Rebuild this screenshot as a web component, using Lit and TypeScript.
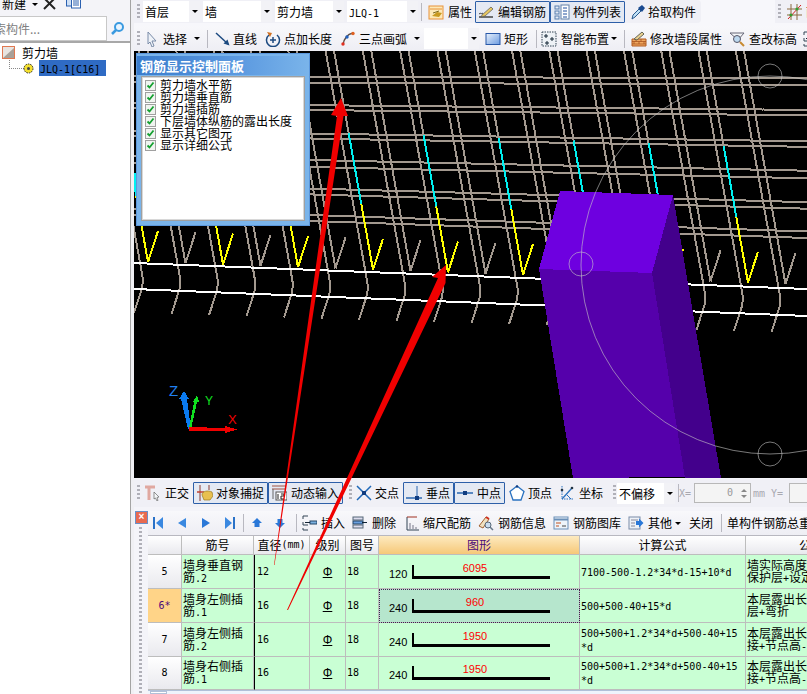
import { LitElement, html, css, svg } from "lit";
import { customElement } from "lit/decorators.js";

const ic = (c: unknown, w = 16) => html`<svg class="ic" width=${w} height="16" viewBox="0 0 16 16">${c}</svg>`;
const icons: Record<string, unknown> = {
  folder: svg`<rect x="1" y="2" width="14" height="13" fill="#fde9b8" stroke="#e8923a"/><path d="M2 5h12" stroke="#e8923a"/><path d="M4 12l5-4 5 1-3 4z" fill="#c89a20"/><path d="M5 9l6-2" stroke="#7a6a20"/>`,
  pencil: svg`<path d="M1 13h14" stroke="#444" stroke-width="1.5"/><path d="M4 11L13 3l2 2-8 7-4 1z" fill="#e8c860" stroke="#555" stroke-width=".7"/><path d="M1 10c2-2 2 1 4-1" stroke="#444" fill="none"/>`,
  list: svg`<rect x="1" y="2" width="4" height="3" fill="none" stroke="#5a80b0"/><rect x="1" y="7" width="4" height="3" fill="none" stroke="#5a80b0"/><rect x="1" y="12" width="4" height="3" fill="none" stroke="#5a80b0"/><rect x="7" y="1" width="8" height="14" fill="#fff" stroke="#6080a8"/><path d="M9 4h4M9 7h4M9 10h4M9 13h4" stroke="#2050a0"/>`,
  dropper: svg`<path d="M2 15l1-4 6-6 2 2-6 6z" fill="#bfe0f5" stroke="#2a5a90"/><path d="M8 4l4-3 3 3-3 4z" fill="#1a4a90"/>`,
  plan: svg`<path d="M4 0v16M10 0v16M0 5h15M0 11h15" stroke="#8a6a40"/><path d="M1 15L14 1" stroke="#d02020"/><circle cx="4" cy="11" r="1.6" fill="#30a030"/><circle cx="10" cy="5" r="1.6" fill="#30a030"/>`,
  cursor: svg`<path d="M3 1l8 9H7l2 5-2 1-2-5-2 2z" fill="#eef2f8" stroke="#7a8ca8"/>`,
  line: svg`<path d="M1 2l12 11" stroke="#1c4a80" stroke-width="1.5"/><path d="M14.500 14.500l-6-2 4-4z" fill="#1c4a80"/>`,
  addlen: svg`<path d="M4 4a6.500 6.500 0 1 0 8 0" fill="none" stroke="#1c4a80" stroke-width="1.5"/><path d="M2 1l5 1-2 4z" fill="#d07020"/><path d="M8 6v6M5 9h6" stroke="#1c4a80" stroke-width="1.500"/>`,
  arc: svg`<path d="M3 14C4 7 8 3 13 2" fill="none" stroke="#5a4a40" stroke-width="1.300"/><circle cx="3" cy="13" r="1.700" fill="#e03020"/><circle cx="7" cy="6" r="1.700" fill="#2060c0"/><circle cx="13" cy="2.500" r="1.700" fill="#e06020"/>`,
  rect: svg`<defs><linearGradient id="rg" x1="0" y1="0" x2="1" y2="1"><stop offset="0" stop-color="#eaf2fc"/><stop offset="1" stop-color="#6a9ae0"/></linearGradient></defs><rect x="1" y="2.500" width="14" height="11" fill="url(#rg)" stroke="#2858a8"/>`,
  smart: svg`<rect x="1" y="1" width="14" height="14" fill="#eef2f6" stroke="#345" stroke-dasharray="1.500 1"/><path d="M5 3v4M3 5h4M11 6v4M9 8h4M6 10v4M4 12h4" stroke="#123"/>`,
  bricks: svg`<path d="M1 8h14v7H1z" fill="#f0a860" stroke="#b05a20"/><path d="M1 10.500h14M1 13h14M5 8v2.500M10 8v2.500M3 10.500V13M8 10.500V13M13 10.500V13" stroke="#a04a18" stroke-width=".7"/><path d="M3 8l8-7 2 2-7 6z" fill="#e8d090" stroke="#665"/>`,
  elev: svg`<path d="M1 2h14L9 9z" fill="#f4f6f8" stroke="#667"/><circle cx="8" cy="8" r="3.500" fill="#bcd8ef" stroke="#556"/><path d="M11 11l4 4" stroke="#c88a30" stroke-width="2"/>`,
  ortho: svg`<path d="M0 2h10M4 2v13" stroke="#e0a8a0" stroke-width="3"/><path d="M9 7l5 5-2 .5 1 3-1 .5-1.500-3-1.500 1z" fill="#f4f6f8" stroke="#666" stroke-width=".7"/>`,
  snap: svg`<path d="M3 0v16M12 0v5" stroke="#8a3a30"/><path d="M0 7h7" stroke="#c04030" stroke-width="1.500"/><path d="M5 10c0-4 6-5 10-3l1 4-3 4H7z" fill="#e8c050" stroke="#9a7a20" stroke-width=".7"/>`,
  dyn: svg`<path d="M1 1h14M1 4h14" stroke="#a05040"/><path d="M2 4v10" stroke="#666"/><rect x="5" y="7" width="11" height="8" fill="#fff" stroke="#555"/><path d="M7 9v5M10 9h3v2h-3v3h3" stroke="#222" fill="none"/>`,
  cross: svg`<path d="M1 1l14 14M15 1L1 15" stroke="#1f68b8" stroke-width="1.500"/><rect x="6" y="6" width="4" height="4" fill="#103c80"/>`,
  perp: svg`<path d="M0 13h16" stroke="#2a66b0" stroke-width="1.500"/><path d="M11 1v12" stroke="#2a66b0"/><rect x="9" y="11" width="4" height="4" fill="#103c80"/>`,
  mid: svg`<path d="M0 8h16" stroke="#2a66b0" stroke-width="1.500"/><rect x="6" y="6" width="4" height="4" fill="#103c80"/>`,
  pent: svg`<path d="M8 1l7 5.500-3 8.500H4L1 6.500z" fill="#fff" stroke="#2a72c0" stroke-width="1.300"/><circle cx="8" cy="1.500" r="1.200" fill="#103c80"/>`,
  coord: svg`<path d="M3 1v13h12" stroke="#2a72c0" stroke-dasharray="1.500 1" fill="none"/><path d="M3 14L13 3" stroke="#2a72c0" stroke-width="1.300"/><path d="M8 10l4 4" stroke="#2a72c0"/><circle cx="13" cy="3" r="1.300" fill="#234"/><circle cx="3" cy="5" r="1.300" fill="#234"/>`,
  first: svg`<rect x="2" y="2" width="2" height="12" fill="#2a72c8"/><path d="M12 2v12L5 8z" fill="#3a88e0"/>`,
  prev: svg`<path d="M12 3v10L4 8z" fill="#3a88e0"/>`,
  next: svg`<path d="M4 3v10l8-5z" fill="#2a78d8"/>`,
  last: svg`<rect x="10" y="2" width="2" height="12" fill="#2a72c8"/><path d="M2 2v12l7-6z" fill="#3a88e0"/>`,
  up: svg`<path d="M7 3l5 5H9.500v4h-5V8H2z" fill="#2a78d8"/>`,
  down: svg`<path d="M7 13L2 8h2.500V4h5v4H12z" fill="#2a78d8"/>`,
  ins: svg`<path d="M2 1h5M2 1v3M2 7v3h5M2 13v2h5" stroke="#345" fill="none"/><rect x="9" y="6" width="7" height="3" fill="#7ab0e0" stroke="#246"/><path d="M4 7.500h5" stroke="#123"/>`,
  del: svg`<rect x="1" y="2" width="10" height="3" fill="#dde" stroke="#567"/><rect x="1" y="6" width="10" height="3" fill="#6aa0e0" stroke="#246"/><rect x="1" y="10" width="10" height="3" fill="#dde" stroke="#567"/><path d="M10 7.500h5" stroke="#123"/>`,
  scale: svg`<path d="M2 2v13h12" stroke="#345" fill="none"/><path d="M2 2h10" stroke="#a03020"/><path d="M5 8v6M8 10v4M11 12v2" stroke="#778"/>`,
  info: svg`<path d="M1 11l7-9 3 2-6 9z" fill="#f0e0c0" stroke="#a06030"/><path d="M8 2l3 2" stroke="#d03020" stroke-width="2"/><circle cx="10" cy="10" r="3" fill="#cde" stroke="#567"/><path d="M12 12l3 3" stroke="#678" stroke-width="1.500"/>`,
  lib: svg`<rect x="1" y="2" width="14" height="12" fill="#eef4fa" stroke="#6a90b8"/><path d="M1 4.500h14" stroke="#6a90b8" stroke-width="2"/><path d="M3 8h5M3 11h3" stroke="#c05020"/><path d="M9 11h4" stroke="#444"/>`,
  other: svg`<rect x="1" y="2" width="11" height="12" fill="#eef2f8" stroke="#7a8ca8"/><path d="M3 5h7M3 8h4M3 11h4" stroke="#889"/><path d="M8 6h3V3.500l4.500 4.500L11 12.500V10H8z" fill="#2a78d8"/>`,
};

const t = (s: string) =>
  s.split(/([\x21-\x7e]+)/).map((p, i) => (i % 2 ? html`<span class="m">${p}</span>` : p));

type Item = { w: number; pl?: number; icon?: string; label?: string; arrow?: number; active?: boolean; div?: boolean; gap?: number };

const bar = (items: Item[]) =>
  items.map((i) =>
    i.div
      ? html`<span class="div" style="margin-left:${i.pl ?? 0}px;margin-right:${i.w}px"></span>`
      : html`<span class="tool ${i.active ? "on" : ""}" style="width:${i.w}px;padding-left:${i.pl ?? 0}px;gap:${i.gap ?? 4}px">
          ${i.icon ? ic(icons[i.icon]) : ""}${i.label ? html`<span>${t(i.label)}</span>` : ""}${i.arrow !== undefined ? html`<span class="tri" style="margin-left:${i.arrow}px"></span>` : ""}
        </span>`
  );

const combo = (label: string, w: number) => html`<span class="combo" style="width:${w}px"><span class="cv">${t(label)}</span><span class="cb"><span class="tri"></span></span></span>`;

const HL = [77, 83, 106, 111, 135, 140, 162, 169, 191, 197, 218, 224];

function mesh() {
  const out: unknown[] = [];
  const g = "#a3998f";
  for (const y of HL) {
    const s = (y - 60) * 0.00021;
    out.push(svg`<line x1="134" x2="807" y1=${y + s * (134 - 400)} y2=${y + s * (807 - 400)} stroke=${g} stroke-width="2"/>`);
  }
  for (let k = 0; k < 18; k++) {
    const x = 148 + 37.5 * k;
    const y = 262 + (x - 148) * 0.0346;
    const at = (yy: number) => x - 0.178 * (y - yy);
    const even = k % 2 === 0;
    if (even) {
      out.push(svg`<line x1=${at(51)} y1="51" x2=${at(y - 137)} y2=${y - 137} stroke=${g} stroke-width="2"/>`);
      out.push(svg`<line x1=${at(y - 137)} y1=${y - 137} x2=${at(y - 66)} y2=${y - 66} stroke="#00f0f0" stroke-width="2"/>`);
      out.push(svg`<line x1=${at(y - 66)} y1=${y - 66} x2=${x} y2=${y} stroke="#ffff00" stroke-width="2"/>`);
      out.push(svg`<line x1=${x} y1=${y} x2=${x + 10} y2=${y - 31} stroke="#ffff00" stroke-width="2"/>`);
    } else {
      out.push(svg`<line x1=${at(51)} y1="51" x2=${x} y2=${y} stroke=${g} stroke-width="2"/>`);
      out.push(svg`<line x1=${x} y1=${y} x2=${x + 10} y2=${y - 31} stroke=${g} stroke-width="2"/>`);
    }
    const kx = 143 + 37.5 * k;
    const ky = 280 + (kx - 143) * 0.03;
    out.push(svg`<polyline fill="none" stroke=${g} stroke-width="2" points="${kx - 0.18 * (ky - 51)},51 ${kx - 2},${ky - 12} ${kx},${ky} ${kx - 1},${ky + 8} ${kx - 9},${ky + 33}"/>`);
  }
  out.push(svg`<line x1="134.500" y1="173" x2="136.500" y2="190" stroke="#00f0f0" stroke-width="2"/>`);
  out.push(svg`<line x1="134" y1="263" x2="807" y2="289" stroke="#fff" stroke-width="2"/>`);
  out.push(svg`<line x1="134" y1="289" x2="807" y2="316" stroke="#fff" stroke-width="2"/>`);
  return out;
}

const rows = [
  { n: "5", name: ["墙身垂直钢", "筋.2"], d: "12", base: "120", len: "6095", f: ["7100-500-1.2*34*d-15+10*d"], x: ["墙实际高度", "保护层+设定"] },
  { n: "6*", name: ["墙身左侧插", "筋.1"], d: "16", base: "240", len: "960", f: ["500+500-40+15*d"], x: ["本层露出长", "层+弯折"], cur: true },
  { n: "7", name: ["墙身左侧插", "筋.2"], d: "16", base: "240", len: "1950", f: ["500+500+1.2*34*d+500-40+15", "*d"], x: ["本层露出长", "接+节点高-"] },
  { n: "8", name: ["墙身右侧插", "筋.1"], d: "16", base: "240", len: "1950", f: ["500+500+1.2*34*d+500-40+15", "*d"], x: ["本层露出长", "接+节点高-"] },
];

@customElement("app-root")
export class AppRoot extends LitElement {
  static styles = css`
    :host { display: block; position: relative; width: 807px; height: 694px; overflow: hidden; background: #f4f4f9; font: 12px/14px "Noto Sans CJK SC", "Liberation Sans", sans-serif; color: #000; }
    .m { font-family: "DejaVu Sans Mono", "Liberation Mono", monospace; font-size: 10px; }
    .shell { display: grid; grid-template-columns: 130px 4px 673px; height: 694px; }
    .left { background: #fff; display: flex; flex-direction: column; overflow: hidden; }
    .split { background: #f0f0f4; border-left: 1px solid #a4a4a4; }
    .ltop { height: 16px; flex: none; background: #f4f4f8; display: flex; align-items: flex-start; overflow: hidden; padding-left: 2px; }
    .ltop .lbl { margin-top: -3px; }
    .ltop .tri { margin: 3px 0 0 6px; }
    .ltop .x { margin: -3px 0 0 5px; }
    .ltop .doc { margin: -3px 0 0 10px; }
    .lsearch { height: 25px; flex: none; display: flex; background: #f4f4f8; border-bottom: 2px solid #a8a8a8; }
    .linput { width: 106px; background: #fff; border: 1px solid #c8c8c8; border-left: 0; color: #808080; overflow: hidden; white-space: nowrap; line-height: 24px; }
    .linput span { display: block; margin-left: -6px; }
    .lbtn { flex: 1; display: flex; align-items: center; padding-left: 3px; }
    .tree { padding: 2px 0 0 2px; }
    .tn { display: flex; align-items: center; height: 15px; gap: 7px; }
    .tn2 { display: flex; align-items: center; height: 16px; padding-left: 7px; }
    .dots { width: 14px; height: 8px; margin-top: -8px; border-left: 1px dotted #888; border-bottom: 1px dotted #888; }
    .sel { background: #2f6bc4; margin-left: 5px; width: 66px; height: 16px; line-height: 16px; padding-left: 1px; white-space: nowrap; }
    .gear { margin-left: -1px; }
    .right { display: flex; flex-direction: column; min-width: 0; }
    .tb { flex: none; display: flex; align-items: center; overflow: hidden; white-space: nowrap; }
    .r1 { height: 26px; background: #f7f7fb; align-items: flex-start; }
    .g1 { height: 23px; background: #f0f0f6; display: flex; align-items: center; border-radius: 0 4px 4px 0; flex: none; }
    .g2 { flex: 1; border-radius: 0; min-width: 0; overflow: hidden; }
    .sp74 { width: 74px; flex: none; }
    .mr4 { margin-right: 4px; }
    .pl3 { margin-left: 3px; }
    .r2 { height: 25px; background: linear-gradient(#f8f8fb, #eeeef4); }
    .grip { width: 3px; height: 16px; margin: 0 3px 0 3px; flex: none; background: repeating-linear-gradient(#b0b0b8 0 2px, transparent 2px 4px); }
    .grip.a { margin: 0 1px 0 0; }
    .grip.b { margin: 0 1px 0 4px; }
    .tool { display: inline-flex; align-items: center; box-sizing: border-box; height: 22px; flex: none; }
    .tool.on { border: 1px solid #2d5fa8; background: #e4e9f3; border-radius: 1px; }
    .ic { flex: none; display: block; }
    .div { display: inline-block; width: 1px; height: 18px; background: #b8b8c0; flex: none; }
    .tri { width: 0; height: 0; border: 3px solid transparent; border-top: 3px solid #000; border-bottom: 0; display: inline-block; flex: none; }
    .combo { display: inline-flex; height: 21px; background: #fff; flex: none; margin-right: 3px; box-sizing: border-box; align-items: stretch; }
    .cv { flex: 1; padding-left: 2px; line-height: 21px; overflow: hidden; }
    .cb { width: 11px; background: #f2f2f6; display: flex; align-items: center; justify-content: center; margin-left: 2px; }
    .w55 { width: 55px; }
    .canvas { flex: none; height: 427px; position: relative; background: #000; overflow: hidden; }
    .canvas > svg { display: block; }
    .cpanel { position: absolute; left: 2px; top: 2px; width: 174px; height: 173px; box-sizing: border-box; background: #7ab4ea; border: 1px solid #5b97dc; padding: 2px 4px 4px; display: flex; flex-direction: column; }
    .ctitle { height: 19px; flex: none; margin: 0 -4px; padding: 0 3px; color: #fff; font-weight: 700; font-size: 13px; line-height: 20px; background: linear-gradient(90deg, #3a7ccc, #5c9ae0 60%, #7ab4ea); }
    .cbody { flex: 1; background: #fff; border: 1px solid #a0a0a0; margin-top: 1px; padding: 2px 3px; box-shadow: inset 0 0 0 1px #d8d8d8; }
    .ck { display: flex; align-items: center; height: 12px; gap: 4px; line-height: 12px; white-space: nowrap; }
    .box { width: 11px; height: 11px; box-sizing: border-box; border: 1px solid #a0a0a0; background: #f0f4f0; flex: none; }
    .box svg { display: block; }
    .snap { height: 28px; margin-top: 1px; background: #f0f0f6; }
    .spin { width: 57px; height: 20px; box-sizing: border-box; border: 1px solid #b8b8b8; background: #f4f4f4; color: #999; display: flex; align-items: center; justify-content: flex-end; gap: 8px; flex: none; padding-right: 3px; }
    .arrows { display: flex; flex-direction: column; gap: 3px; }
    .tu, .td { width: 0; height: 0; border: 3px solid transparent; border-bottom: 0; border-top: 3px solid #888; }
    .tu { border-top: 0; border-bottom: 3px solid #888; }
    .dimt { color: #a8a8b0; flex: none; }
    .dx { width: 15px; }
    .dm { margin-left: 2px; width: 36px; }
    .panel { flex: 1; display: flex; min-height: 0; margin-top: 4px; }
    .side { width: 14px; flex: none; display: flex; flex-direction: column; align-items: flex-start; padding-left: 1px; box-sizing: border-box; }
    .close { width: 11px; height: 11px; background: #e86a50; border: 1px solid #6a90c8; color: #fff; font: 700 10px/10px "Liberation Sans", sans-serif; text-align: center; flex: none; }
    .vdots { flex: 1; margin: 3px 0 0 4px; width: 3px; background: repeating-linear-gradient(#b0b0b8 0 2px, transparent 2px 4px); }
    .main { flex: 1; min-width: 0; display: flex; flex-direction: column; }
    .ptb { height: 25px; background: linear-gradient(#f8f8fb, #eeeef4); border-bottom: 1px solid #b8b8c0; box-sizing: border-box; }
    .grid { display: grid; grid-template-columns: 34px 72px 56px 36px 33px 201px 166px 62px; grid-template-rows: 19px 34px 34px 34px 33px; flex: none; overflow: hidden; line-height: 12px; }
    .c { box-sizing: border-box; border-right: 1px solid #bdbdbd; border-bottom: 1px solid #bdbdbd; display: flex; align-items: center; overflow: hidden; white-space: nowrap; background: #c9ffd4; padding-left: 1px; }
    .h { background: linear-gradient(#fff, #e9e9ee); justify-content: center; padding: 0; }
    .hx { justify-content: flex-start; padding-left: 53px; }
    .hs { background: linear-gradient(#fdeac0, #f6c878); color: #4a0a7a; }
    .rh { background: linear-gradient(#fff, #e9e9ee); justify-content: center; padding: 0; }
    .rh.cur { background: #ffd488; color: #4a0a7a; }
    .dia { border-left: 1px solid #000; padding-left: 2px; }
    .ctr { justify-content: center; padding: 0; }
    .grade { font: 12px/12px "Liberation Sans", sans-serif; text-decoration: underline; }
    .shape { padding-left: 10px; gap: 5px; }
    .shape.cur { background: #b6e6cd; outline: 1px dotted #402050; outline-offset: -1px; }
    .num { font: 11px/12px "Liberation Sans", sans-serif; margin-top: 4px; width: 18px; flex: none; }
    .l { width: 138px; height: 14px; box-sizing: border-box; border-left: 2px solid #000; border-bottom: 3px solid #000; color: #f00; font: 11px/6px "Liberation Sans", sans-serif; text-align: center; padding-right: 14px; flex: none; }
    .foot { flex: 1; background: #eef4fc; border-top: 1px solid #b0c0d8; display: flex; padding-left: 2px; }
    .ft { width: 15px; border: 1px solid #b0c0d8; background: #fff; }
    .over { position: absolute; left: 0; top: 0; pointer-events: none; }
  `;

  render() {
    const checks = ["剪力墙水平筋", "剪力墙垂直筋", "剪力墙插筋", "下层墙体纵筋的露出长度", "显示其它图元", "显示详细公式"];
    return html`
      <div class="shell">
        <div class="left">
          <div class="ltop">
            <span class="lbl">新建</span><span class="tri"></span>
            <svg class="x" width="13" height="13" viewBox="0 0 13 13"><path d="M1 1l11 11M12 1L1 12" stroke="#222" stroke-width="2"/></svg>
            <svg class="doc" width="15" height="12" viewBox="0 0 15 12"><rect x=".5" y="-2" width="9" height="11" fill="#cfe0f5" stroke="#2a60b0"/><rect x="5.500" y="1" width="9" height="10" fill="#fff" stroke="#2a60b0"/><path d="M7 4h6M7 6h6M7 8h6" stroke="#2a60b0"/></svg>
          </div>
          <div class="lsearch">
            <div class="linput"><span>索构件...</span></div>
            <div class="lbtn"><svg width="15" height="15" viewBox="0 0 15 15"><circle cx="9" cy="6" r="4" fill="#e8f4ff" stroke="#3a9ae0" stroke-width="2"/><path d="M6 9l-4 4" stroke="#3a9ae0" stroke-width="2.500"/></svg></div>
          </div>
          <div class="tree">
            <div class="tn">
              <svg width="13" height="13" viewBox="0 0 13 13"><rect x=".5" y=".5" width="12" height="12" fill="#e8e4e0" stroke="#e07850"/><path d="M1 12L12 2v10z" fill="#a8a098"/></svg>
              <span>剪力墙</span>
            </div>
            <div class="tn2">
              <span class="dots"></span>
              <svg class="gear" width="11" height="11" viewBox="0 0 11 11"><circle cx="5.500" cy="5.500" r="4.500" fill="#f4e030" stroke="#222" stroke-dasharray="1.500 1"/><circle cx="5.500" cy="5.500" r="1.500" fill="#444"/></svg>
              <span class="sel"><span class="m">JLQ-1[C16]</span></span>
            </div>
          </div>
        </div>
        <div class="split"></div>
        <div class="right">
          <div class="tb r1">
            <div class="g1">
              <span class="grip"></span>
              ${combo("首层", 57)}${combo("墙", 69)}${combo("剪力墙", 69)}${combo("JLQ-1", 71)}
              <span class="div mr4"></span>
              ${bar([
                { w: 49, pl: 2, icon: "folder", label: "属性" },
                { w: 75, pl: 2, icon: "pencil", label: "编辑钢筋", active: true },
                { w: 75, pl: 3, icon: "list", label: "构件列表", active: true, gap: 3 },
                { w: 76, pl: 5, icon: "dropper", label: "拾取构件", gap: 2 },
              ])}
            </div>
            <span class="sp74"></span>
            <div class="g1 g2">
              <span class="grip"></span>
              <span class="pl3"></span>
              ${ic(icons.plan)}<span class="pl3">面</span>
            </div>
          </div>
          <div class="tb r2">
            <span class="grip"></span>
            ${bar([
              { w: 61, pl: 2, icon: "cursor", label: "选择", arrow: 5, gap: 2 },
              { div: true, w: 6, pl: 3 },
              { w: 51, pl: 1, icon: "line", label: "直线", gap: 2 },
              { w: 75, pl: 0, icon: "addlen", label: "点加长度", gap: 3 },
              { w: 84, pl: 0, icon: "arc", label: "三点画弧", arrow: 4, gap: 3 },
            ])}
            <span class="combo w55"><span class="cv"></span><span class="cb"><span class="tri"></span></span></span>
            ${bar([
              { w: 54, pl: 3, icon: "rect", label: "矩形", gap: 3 },
              { div: true, w: 3, pl: 0 },
              { w: 84, pl: 1, icon: "smart", label: "智能布置", arrow: -2, gap: 4 },
              { div: true, w: 5, pl: 0 },
              { w: 98, pl: 1, icon: "bricks", label: "修改墙段属性", gap: 3 },
              { w: 74, pl: 1, icon: "elev", label: "查改标高", gap: 4 },
              { w: 16, pl: 0, icon: "ins" },
            ])}
          </div>
          <div class="canvas">
            <svg width="673" height="427" viewBox="134 51 673 427">
              <g shape-rendering="crispEdges">
                ${mesh()}
                <polygon points="560,191 673,195 652,273 539,269" fill="#6e00e0"/>
                <polygon points="539,269 652,273 685,477 573,478" fill="#5500ab"/>
                <polygon points="652,273 673,195 721,478 685,478" fill="#43008c"/>
              </g>
              <circle cx="770" cy="265" r="189" fill="none" stroke="#c8c8c8" stroke-opacity=".6"/>
              <circle cx="770" cy="76" r="12" fill="none" stroke="#c8c8c8" stroke-opacity=".6"/>
              <circle cx="581" cy="264" r="12" fill="none" stroke="#c8c8c8" stroke-opacity=".6"/>
              <circle cx="770" cy="454" r="12" fill="none" stroke="#c8c8c8" stroke-opacity=".6"/>
              <g shape-rendering="crispEdges">
                <polygon points="188,429 181,399 179,399 184,391 189,399 187,399 191,429" fill="#0a7af0"/>
                <polygon points="189,428 194,402 193,402 197,395 199,402 197,402 191,429" fill="#10e020"/>
                <polygon points="189,427 225,428 225,426 237,429.500 225,433 225,431 189,431" fill="#f00000"/>
              </g>
              <text x="169" y="396" fill="#2080f0" font-family="Liberation Sans" font-size="15">Z</text>
              <text x="205" y="405" fill="#10e020" font-family="Liberation Sans" font-size="12">Y</text>
              <text x="228" y="424" fill="#f00000" font-family="Liberation Sans" font-size="13">X</text>
            </svg>
            <div class="cpanel">
              <div class="ctitle">钢筋显示控制面板</div>
              <div class="cbody">
                ${checks.map(
                  (c) => html`<div class="ck"><span class="box"><svg width="9" height="9" viewBox="0 0 9 9"><path d="M1.500 4.500l2 2 4-5" fill="none" stroke="#14a030" stroke-width="1.800"/></svg></span><span>${c}</span></div>`
                )}
              </div>
            </div>
          </div>
          <div class="tb snap">
            <span class="grip"></span>
            ${bar([
              { w: 50, pl: 2, icon: "ortho", label: "正交", gap: 4 },
              { w: 75, pl: 3, icon: "snap", label: "对象捕捉", active: true, gap: 3 },
              { w: 75, pl: 2, icon: "dyn", label: "动态输入", active: true, gap: 4 },
              { w: 6, pl: 0 },
            ])}
            <span class="grip a"></span>
            ${bar([
              { w: 50, pl: 3, icon: "cross", label: "交点", gap: 3 },
              { w: 51, pl: 2, icon: "perp", label: "垂点", active: true, gap: 4 },
              { w: 51, pl: 2, icon: "mid", label: "中点", active: true, gap: 4 },
              { w: 50, pl: 4, icon: "pent", label: "顶点", gap: 3 },
              { w: 54, pl: 4, icon: "coord", label: "坐标", gap: 4 },
            ])}
            <span class="grip b"></span>
            ${combo("不偏移", 58)}
            <span class="div"></span>
            <span class="dimt dx"><span class="m">X=</span></span>
            <span class="spin"><span class="m">0</span><span class="arrows"><span class="tu"></span><span class="td"></span></span></span>
            <span class="dimt dm"><span class="m">mm Y=</span></span>
            <span class="spin"></span>
          </div>
          <div class="panel">
            <div class="side">
              <span class="close">×</span>
              <span class="vdots"></span>
            </div>
            <div class="main">
              <div class="tb ptb">
                ${bar([
                  { w: 23, pl: 3, icon: "first" },
                  { w: 24, pl: 3, icon: "prev" },
                  { w: 23, pl: 3, icon: "next" },
                  { w: 24, pl: 5, icon: "last" },
                  { div: true, w: 5, pl: 1 },
                  { w: 24, pl: 1, icon: "up" },
                  { w: 23, pl: 0, icon: "down" },
                  { div: true, w: 4, pl: 0 },
                  { w: 51, pl: 0, icon: "ins", label: "插入", gap: 4 },
                  { w: 53, pl: 0, icon: "del", label: "删除", gap: 4 },
                  { w: 73, pl: 0, icon: "scale", label: "缩尺配筋", gap: 2 },
                  { w: 75, pl: 0, icon: "info", label: "钢筋信息", gap: 4 },
                  { w: 75, pl: 0, icon: "lib", label: "钢筋图库", gap: 4 },
                  { w: 61, pl: 0, icon: "other", label: "其他", arrow: -1, gap: 4 },
                  { w: 32, pl: 0, label: "关闭" },
                  { div: true, w: 5, pl: 0 },
                  { w: 100, pl: 0, label: "单构件钢筋总重" },
                ])}
              </div>
              <div class="grid">
                <div class="c h"></div>
                <div class="c h">筋号</div>
                <div class="c h">${t("直径(mm)")}</div>
                <div class="c h">级别</div>
                <div class="c h">图号</div>
                <div class="c h hs">图形</div>
                <div class="c h">计算公式</div>
                <div class="c h hx">公式描述</div>
                ${rows.map(
                  (r) => html`
                    <div class="c rh ${r.cur ? "cur" : ""}"><span class="m">${r.n}</span></div>
                    <div class="c"><span>${t(r.name[0])}<br />${t(r.name[1])}</span></div>
                    <div class="c dia"><span class="m">${r.d}</span></div>
                    <div class="c ctr"><span class="grade">Φ</span></div>
                    <div class="c"><span class="m">18</span></div>
                    <div class="c shape ${r.cur ? "cur" : ""}"><span class="num">${r.base}</span><span class="l">${r.len}</span></div>
                    <div class="c"><span>${r.f.map((x, i) => html`${i ? html`<br />` : ""}${t(x)}`)}</span></div>
                    <div class="c"><span>${t(r.x[0])}<br />${t(r.x[1])}</span></div>
                  `
                )}
              </div>
              <div class="foot"><span class="ft"></span></div>
            </div>
          </div>
        </div>
      </div>
      <svg class="over" width="807" height="694" viewBox="0 0 807 694">
        <polygon points="341,98 348,116 343.500,116 274.500,565 274,565 337,116 331,115" fill="#f00000"/>
        <polygon points="446,265 445.500,283 288,610 287,610 438,278 432,277" fill="#f00000"/>
      </svg>
    `;
  }
}
